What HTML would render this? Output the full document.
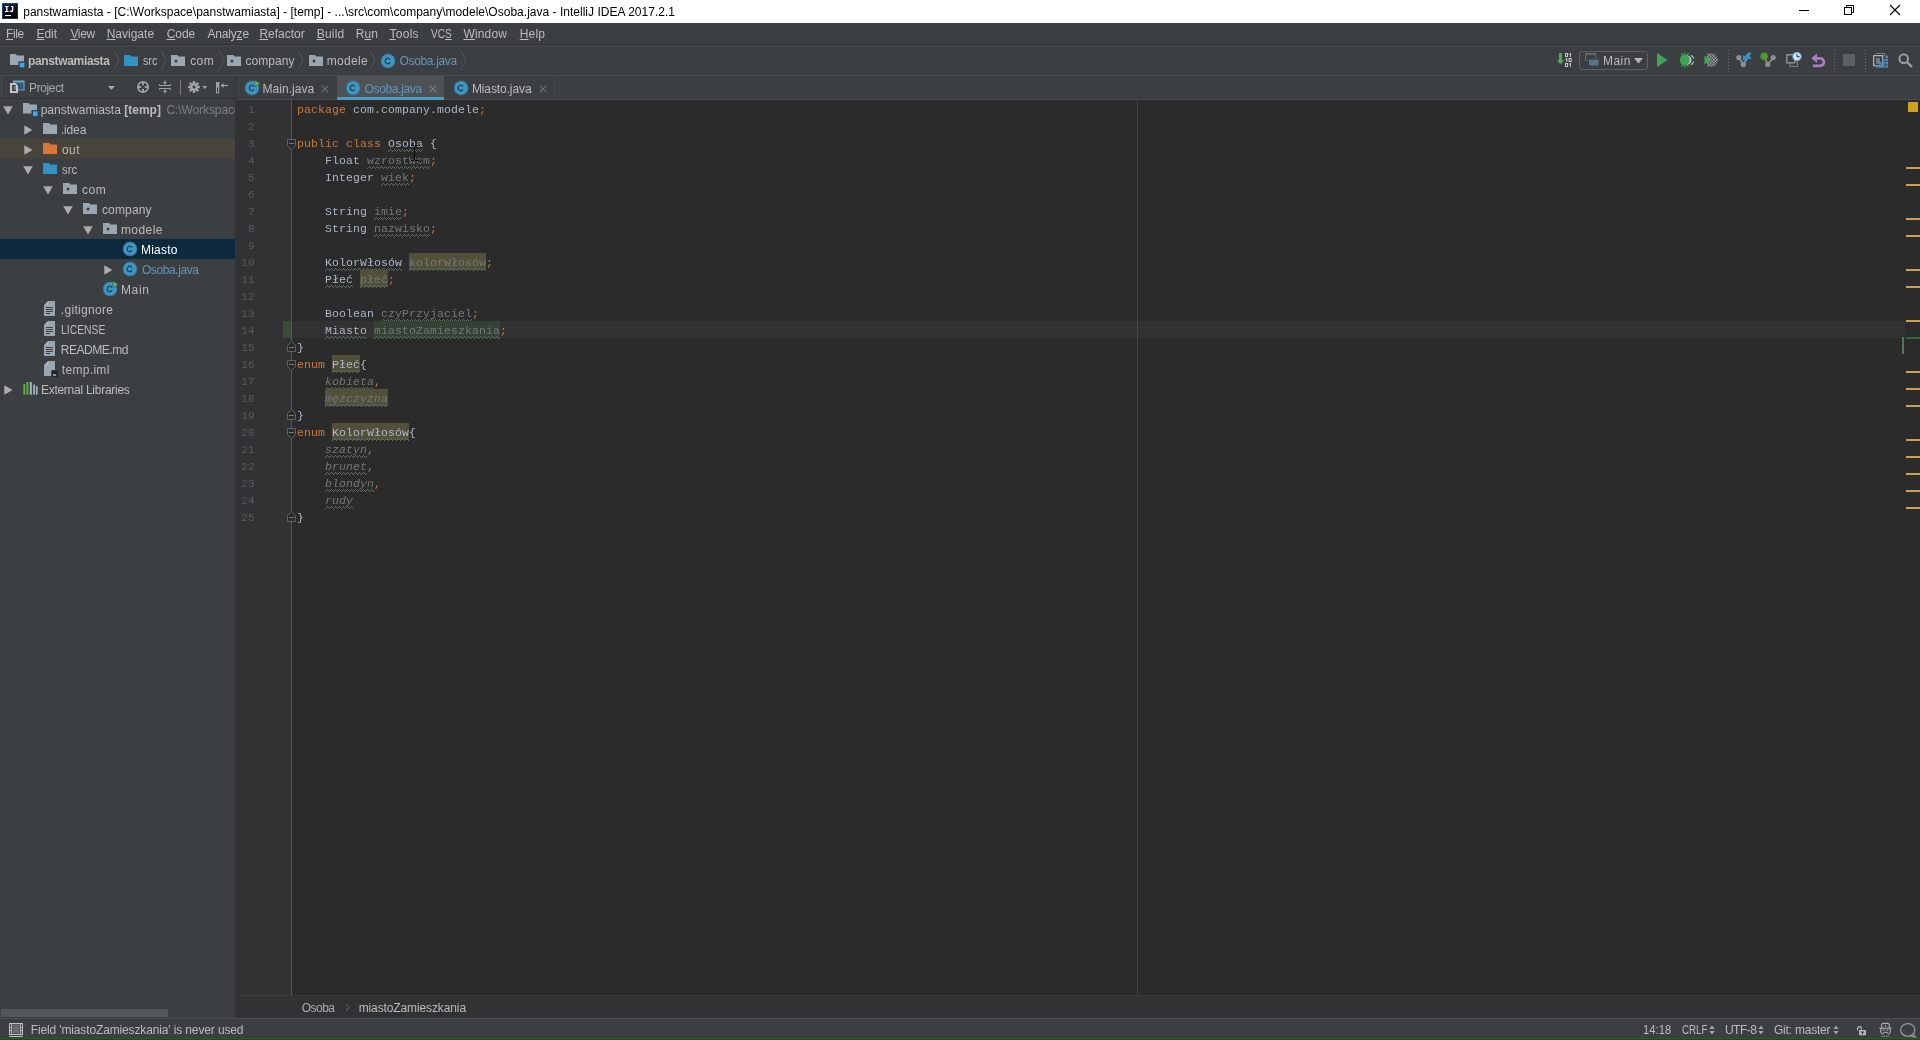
<!DOCTYPE html><html><head><meta charset="utf-8"><title>IntelliJ IDEA</title><style>
html,body{margin:0;padding:0;}
body{width:1920px;height:1040px;overflow:hidden;background:#3c3f41;position:relative;font-family:"Liberation Sans",sans-serif;}
#root{position:absolute;left:0;top:0;width:1920px;height:1040px;overflow:hidden;will-change:transform;}
#root>div,#root>svg,#root>span{position:absolute;display:block;}
#root>span{white-space:pre;line-height:1;}
u{text-decoration:underline;text-underline-offset:1px;}
.m{font-family:"Liberation Mono",monospace;}


</style></head><body><div id="root">
<div style="left:0px;top:0px;width:1920px;height:23px;background:#ffffff;"></div>
<svg style="left:2px;top:3px;" width="16" height="16" viewBox="0 0 16 16"><defs><linearGradient id="ij" x1="0" y1="0" x2="0.6" y2="1"><stop offset="0" stop-color="#1f4f7d"/><stop offset="1" stop-color="#14304e"/></linearGradient><linearGradient id="ij2" x1="0" y1="0" x2="0.3" y2="1"><stop offset="0" stop-color="#132c49"/><stop offset="0.55" stop-color="#070f1c"/><stop offset="1" stop-color="#000"/></linearGradient></defs><rect width="16" height="16" fill="url(#ij)"/><rect x="1" y="1" width="14" height="14" fill="url(#ij2)"/><rect x="3" y="12" width="6" height="1.1" fill="#fff"/><path d="M3 3H6.6V4.1H5.5V8H6.6V9.1H3V8H4.1V4.1H3Z" fill="#fff"/><path d="M9 3H11.3V7.2A1.9 1.9 0 0 1 9.3 9.2A2 2 0 0 1 7.4 7.7L8.6 7.2A0.8 0.8 0 0 0 9.3 7.9A0.7 0.7 0 0 0 9.9 7.1V4.1H9Z" fill="#fff"/></svg>
<div style="left:1799px;top:10px;width:10px;height:1px;background:#000;"></div>
<svg style="left:1843px;top:4px;" width="12" height="12" viewBox="0 0 12 12"><path d="M3.5 3.5V1.5H10.5V8.5H8.5" fill="none" stroke="#000" stroke-width="1"/><rect x="1.5" y="3.5" width="7" height="7" fill="none" stroke="#000" stroke-width="1"/></svg>
<svg style="left:1889px;top:4px;" width="12" height="12" viewBox="0 0 12 12"><path d="M1 1L11 11M11 1L1 11" fill="none" stroke="#000" stroke-width="1.1"/></svg>
<div style="left:0px;top:23px;width:1920px;height:22px;background:#3c3f41;"></div>
<div style="left:0px;top:44px;width:1920px;height:1px;background:#2d2f31;"></div>
<div style="left:0px;top:45px;width:1920px;height:1px;background:#484b4d;"></div>
<div style="left:0px;top:46px;width:1920px;height:29px;background:#3c3f41;"></div>
<div style="left:0px;top:75px;width:1920px;height:1px;background:#4b4e50;"></div>
<svg style="left:10px;top:54px;overflow:visible;" width="17" height="15" viewBox="0 0 17 15"><path d="M0 0H5.5L7 1.5H14V7.5H8.5V11H0Z" fill="#9aa7b0"/><rect x="9.3" y="8.3" width="5.6" height="5.6" fill="#45a8dc" stroke="#1f4a63" stroke-width="1"/></svg>
<svg style="left:113px;top:50px;" width="8" height="21" viewBox="0 0 8 21"><path d="M1 0.5L6 10.2L1 20" fill="none" stroke="#54575a" stroke-width="1"/></svg>
<svg style="left:124px;top:55px;" width="14" height="11" viewBox="0 0 14 11"><path d="M0 0H6L7.5 1.5H14V11H0Z" fill="#3592c4"/></svg>
<svg style="left:160px;top:50px;" width="8" height="21" viewBox="0 0 8 21"><path d="M1 0.5L6 10.2L1 20" fill="none" stroke="#54575a" stroke-width="1"/></svg>
<svg style="left:171px;top:55px;" width="14" height="11" viewBox="0 0 14 11"><path d="M0 0H6L7.5 1.5H14V11H0Z" fill="#9aa7b0"/><circle cx="5" cy="6" r="1.5" fill="#3c3f41"/></svg>
<svg style="left:217.5px;top:50px;" width="8" height="21" viewBox="0 0 8 21"><path d="M1 0.5L6 10.2L1 20" fill="none" stroke="#54575a" stroke-width="1"/></svg>
<svg style="left:227px;top:55px;" width="14" height="11" viewBox="0 0 14 11"><path d="M0 0H6L7.5 1.5H14V11H0Z" fill="#9aa7b0"/><circle cx="5" cy="6" r="1.5" fill="#3c3f41"/></svg>
<svg style="left:297px;top:50px;" width="8" height="21" viewBox="0 0 8 21"><path d="M1 0.5L6 10.2L1 20" fill="none" stroke="#54575a" stroke-width="1"/></svg>
<svg style="left:309px;top:55px;" width="14" height="11" viewBox="0 0 14 11"><path d="M0 0H6L7.5 1.5H14V11H0Z" fill="#9aa7b0"/><circle cx="5" cy="6" r="1.5" fill="#3c3f41"/></svg>
<svg style="left:368.5px;top:50px;" width="8" height="21" viewBox="0 0 8 21"><path d="M1 0.5L6 10.2L1 20" fill="none" stroke="#54575a" stroke-width="1"/></svg>
<svg style="left:381px;top:54px;overflow:visible;" width="15" height="14" viewBox="0 0 15 14"><circle cx="7.05" cy="6.95" r="7" fill="#4194bf" stroke="#2f6f92" stroke-width="0.7"/><path d="M8.9 5.6A2.5 2.8 0 1 0 8.9 8.4" fill="none" stroke="#123d5a" stroke-width="1.25"/></svg>
<svg style="left:459.5px;top:50px;" width="8" height="21" viewBox="0 0 8 21"><path d="M1 0.5L6 10.2L1 20" fill="none" stroke="#54575a" stroke-width="1"/></svg>
<div style="left:0px;top:76px;width:236px;height:942px;background:#3c3f41;"></div>
<div style="left:0px;top:98px;width:236px;height:1px;background:#2f3133;"></div>
<div style="left:235px;top:76px;width:1px;height:942px;background:#2f3133;"></div>
<div style="left:1px;top:76px;width:1px;height:22px;background:#4b4e50;"></div>
<svg style="left:10px;top:80px;" width="15" height="14" viewBox="0 0 15 14"><rect x="3.5" y="1" width="10.5" height="9" fill="#2c5a7c" stroke="#7ba3c0" stroke-width="1"/><rect x="3.5" y="1" width="10.5" height="1.5" fill="#7ba3c0"/><path d="M0 3H5.5L8 5.5V13H0Z" fill="#c4c6c8"/><path d="M2.2 5H5L6 6V11H2.2Z" fill="#2b2b2b"/><path d="M3.5 7H6M3.5 9H6" stroke="#c4c6c8" stroke-width="1"/></svg>
<svg style="left:108px;top:86px;" width="7" height="4" viewBox="0 0 7 4"><path d="M0 0H7L3.5 4Z" fill="#a5a8aa"/></svg>
<svg style="left:137px;top:81px;" width="12" height="12" viewBox="0 0 12 12"><circle cx="6" cy="6" r="5.1" fill="none" stroke="#a0a3a5" stroke-width="1.7"/><path d="M6 0.5V4.2M6 7.8V11.5M0.5 6H4.2M7.8 6H11.5" stroke="#a0a3a5" stroke-width="1.9"/></svg>
<svg style="left:159px;top:80px;" width="12" height="14" viewBox="0 0 12 14"><path d="M0.5 5.5H11.5M0.5 8.5H11.5" stroke="#a0a3a5" stroke-width="1"/><path d="M0.5 4V5.5M11.5 4V5.5M0.5 10V8.5M11.5 10V8.5" stroke="#a0a3a5" stroke-width="1"/><path d="M6 0.5V4M6 13.5V10" stroke="#a0a3a5" stroke-width="1.1"/><path d="M3.8 2.2L6 4.6L8.2 2.2ZM3.8 11.8L6 9.4L8.2 11.8Z" fill="#a0a3a5"/></svg>
<div style="left:179.5px;top:80px;width:1.5px;height:15px;background:#77797b;"></div>
<svg style="left:188px;top:81px;" width="20" height="12" viewBox="0 0 20 12"><g transform="translate(6,6)"><circle r="4.1" fill="#a0a3a5"/><g stroke="#a0a3a5" stroke-width="2.3"><path d="M0 -6V6M-6 0H6M-4.3 -4.3L4.3 4.3M-4.3 4.3L4.3 -4.3"/></g><circle r="1.5" fill="#3c3f41"/></g><path d="M14.2 5H19.2L16.7 8Z" fill="#a0a3a5"/></svg>
<svg style="left:216px;top:82px;" width="13" height="12" viewBox="0 0 13 12"><rect x="0.5" y="0.5" width="2.2" height="10.5" fill="none" stroke="#a0a3a5" stroke-width="1"/><rect x="0" y="0" width="3.2" height="5.5" fill="#a0a3a5"/><path d="M5 3.5H12" stroke="#a0a3a5" stroke-width="1.2"/><path d="M7.6 1L5 3.5L7.6 6Z" fill="#a0a3a5"/></svg>
<div style="left:0px;top:139px;width:235px;height:20px;background:#47453b;"></div>
<div style="left:0px;top:239px;width:235px;height:20px;background:#0d293e;"></div>
<svg style="left:3px;top:106px;" width="10" height="9" viewBox="0 0 10 9"><path d="M0.2 0.3H9.8L5 8.5Z" fill="#adadad"/></svg>
<svg style="left:23px;top:103px;overflow:visible;" width="17" height="15" viewBox="0 0 17 15"><path d="M0 0H5.5L7 1.5H14V7H8.5V10.5H0Z" fill="#9aa7b0"/><rect x="9.4" y="7.9" width="5.6" height="5.6" fill="#45a8dc" stroke="#1f4a63" stroke-width="1"/></svg>
<div style="left:166.5px;top:99px;width:68px;height:20px;overflow:hidden;"><span style="position:absolute;left:0;top:4.5px;font-size:12px;line-height:1;color:#7d8082;white-space:pre;letter-spacing:-0.1px;">C:\Workspace\panstwamiasta</span></div>
<svg style="left:24px;top:125px;" width="9" height="10" viewBox="0 0 9 10"><path d="M0.3 0.3L8.5 5L0.3 9.7Z" fill="#adadad"/></svg>
<svg style="left:43px;top:123px;" width="14" height="11" viewBox="0 0 14 11"><path d="M0 0H6L7.5 1.5H14V11H0Z" fill="#9aa7b0"/></svg>
<svg style="left:24px;top:145px;" width="9" height="10" viewBox="0 0 9 10"><path d="M0.3 0.3L8.5 5L0.3 9.7Z" fill="#adadad"/></svg>
<svg style="left:43px;top:143px;" width="14" height="11" viewBox="0 0 14 11"><path d="M0 0H6L7.5 1.5H14V11H0Z" fill="#d9763a"/></svg>
<svg style="left:23px;top:166px;" width="10" height="9" viewBox="0 0 10 9"><path d="M0.2 0.3H9.8L5 8.5Z" fill="#adadad"/></svg>
<svg style="left:43px;top:163px;" width="14" height="11" viewBox="0 0 14 11"><path d="M0 0H6L7.5 1.5H14V11H0Z" fill="#3592c4"/></svg>
<svg style="left:43px;top:186px;" width="10" height="9" viewBox="0 0 10 9"><path d="M0.2 0.3H9.8L5 8.5Z" fill="#adadad"/></svg>
<svg style="left:63px;top:183px;" width="14" height="11" viewBox="0 0 14 11"><path d="M0 0H6L7.5 1.5H14V11H0Z" fill="#9aa7b0"/><circle cx="5" cy="6" r="1.5" fill="#3c3f41"/></svg>
<svg style="left:63px;top:206px;" width="10" height="9" viewBox="0 0 10 9"><path d="M0.2 0.3H9.8L5 8.5Z" fill="#adadad"/></svg>
<svg style="left:83px;top:203px;" width="14" height="11" viewBox="0 0 14 11"><path d="M0 0H6L7.5 1.5H14V11H0Z" fill="#9aa7b0"/><circle cx="5" cy="6" r="1.5" fill="#3c3f41"/></svg>
<svg style="left:83px;top:226px;" width="10" height="9" viewBox="0 0 10 9"><path d="M0.2 0.3H9.8L5 8.5Z" fill="#adadad"/></svg>
<svg style="left:103px;top:223px;" width="14" height="11" viewBox="0 0 14 11"><path d="M0 0H6L7.5 1.5H14V11H0Z" fill="#9aa7b0"/><circle cx="5" cy="6" r="1.5" fill="#3c3f41"/></svg>
<svg style="left:123px;top:242px;overflow:visible;" width="15" height="14" viewBox="0 0 15 14"><circle cx="7.05" cy="6.95" r="7" fill="#4194bf" stroke="#2f6f92" stroke-width="0.7"/><path d="M8.9 5.6A2.5 2.8 0 1 0 8.9 8.4" fill="none" stroke="#123d5a" stroke-width="1.25"/></svg>
<svg style="left:104px;top:265px;" width="9" height="10" viewBox="0 0 9 10"><path d="M0.3 0.3L8.5 5L0.3 9.7Z" fill="#adadad"/></svg>
<svg style="left:123px;top:262px;overflow:visible;" width="15" height="14" viewBox="0 0 15 14"><circle cx="7.05" cy="6.95" r="7" fill="#4194bf" stroke="#2f6f92" stroke-width="0.7"/><path d="M8.9 5.6A2.5 2.8 0 1 0 8.9 8.4" fill="none" stroke="#123d5a" stroke-width="1.25"/></svg>
<svg style="left:103px;top:282px;overflow:visible;" width="15" height="14" viewBox="0 0 15 14"><circle cx="7.05" cy="6.95" r="7" fill="#4194bf" stroke="#2f6f92" stroke-width="0.7"/><path d="M8.9 5.6A2.5 2.8 0 1 0 8.9 8.4" fill="none" stroke="#123d5a" stroke-width="1.25"/><path d="M9.9 -1L15.3 2.4L9.9 5.8Z" fill="#62b35a" stroke="#3c3f41" stroke-width="0.5"/></svg>
<svg style="left:44px;top:301px;" width="11" height="15" viewBox="0 0 11 15"><path d="M4 0H11V15H0V4Z" fill="#9aa7b0"/><path d="M0.6 4L4 0.6V4Z" fill="#b4bec6" opacity="0.8"/><path d="M2 6.5H9M2 8.5H9M2 10.5H9M2 12.5H6" stroke="#3c3f41" stroke-width="1"/></svg>
<svg style="left:44px;top:321px;" width="11" height="15" viewBox="0 0 11 15"><path d="M4 0H11V15H0V4Z" fill="#9aa7b0"/><path d="M0.6 4L4 0.6V4Z" fill="#b4bec6" opacity="0.8"/><path d="M2 6.5H9M2 8.5H9M2 10.5H9M2 12.5H6" stroke="#3c3f41" stroke-width="1"/></svg>
<svg style="left:44px;top:341px;" width="11" height="15" viewBox="0 0 11 15"><path d="M4 0H11V15H0V4Z" fill="#9aa7b0"/><path d="M0.6 4L4 0.6V4Z" fill="#b4bec6" opacity="0.8"/><path d="M2 6.5H9M2 8.5H9M2 10.5H9M2 12.5H6" stroke="#3c3f41" stroke-width="1"/></svg>
<svg style="left:44px;top:361px;overflow:visible;" width="14" height="16" viewBox="0 0 14 16"><path d="M4 0H11V9H7.5V15H0V4Z" fill="#9aa7b0"/><path d="M0.6 4L4 0.6V4Z" fill="#b4bec6" opacity="0.8"/><rect x="7.5" y="9.7" width="6.3" height="6.3" fill="#232526"/><rect x="9" y="13.5" width="3.2" height="1" fill="#fff"/></svg>
<svg style="left:4px;top:385px;" width="9" height="10" viewBox="0 0 9 10"><path d="M0.3 0.3L8.5 5L0.3 9.7Z" fill="#adadad"/></svg>
<svg style="left:22.5px;top:382px;" width="15" height="13" viewBox="0 0 15 13"><g fill="#62b543"><rect x="0.4" y="2" width="1.8" height="10.7"/><rect x="3.5" y="0" width="1.9" height="12.7"/></g><g fill="#a7b9c6"><rect x="6.9" y="0" width="1.9" height="12.7"/><rect x="10.2" y="2.6" width="1.7" height="10.1"/><rect x="12.9" y="4.2" width="1.7" height="8.5"/></g></svg>
<div style="left:1px;top:1009px;width:167px;height:8px;background:#55585a;"></div>
<div style="left:236px;top:76px;width:1684px;height:24px;background:#3c3f41;"></div>
<div style="left:236px;top:99px;width:1684px;height:1px;background:#484a4b;"></div>
<div style="left:554px;top:76px;width:1px;height:23px;background:#464949;"></div>
<div style="left:337px;top:76px;width:107px;height:21px;background:#4e5254;"></div>
<div style="left:337px;top:97px;width:107px;height:3px;background:#4a9cc4;"></div>
<svg style="left:245px;top:81px;overflow:visible;" width="15" height="14" viewBox="0 0 15 14"><circle cx="7.05" cy="6.95" r="7" fill="#4194bf" stroke="#2f6f92" stroke-width="0.7"/><path d="M8.9 5.6A2.5 2.8 0 1 0 8.9 8.4" fill="none" stroke="#123d5a" stroke-width="1.25"/><path d="M9.9 -1L15.3 2.4L9.9 5.8Z" fill="#62b35a" stroke="#3c3f41" stroke-width="0.5"/></svg>
<svg style="left:346px;top:81px;overflow:visible;" width="15" height="14" viewBox="0 0 15 14"><circle cx="7.05" cy="6.95" r="7" fill="#4194bf" stroke="#2f6f92" stroke-width="0.7"/><path d="M8.9 5.6A2.5 2.8 0 1 0 8.9 8.4" fill="none" stroke="#123d5a" stroke-width="1.25"/></svg>
<svg style="left:454px;top:81px;overflow:visible;" width="15" height="14" viewBox="0 0 15 14"><circle cx="7.05" cy="6.95" r="7" fill="#4194bf" stroke="#2f6f92" stroke-width="0.7"/><path d="M8.9 5.6A2.5 2.8 0 1 0 8.9 8.4" fill="none" stroke="#123d5a" stroke-width="1.25"/></svg>
<svg style="left:320.5px;top:84.5px;" width="8" height="8" viewBox="0 0 8 8"><path d="M0.7 0.7L7.3 7.3M7.3 0.7L0.7 7.3" stroke="#6e7173" stroke-width="1.1" fill="none"/></svg>
<svg style="left:428.7px;top:84.5px;" width="8" height="8" viewBox="0 0 8 8"><path d="M0.7 0.7L7.3 7.3M7.3 0.7L0.7 7.3" stroke="#7f8385" stroke-width="1.1" fill="none"/></svg>
<svg style="left:538.7px;top:84.5px;" width="8" height="8" viewBox="0 0 8 8"><path d="M0.7 0.7L7.3 7.3M7.3 0.7L0.7 7.3" stroke="#6e7173" stroke-width="1.1" fill="none"/></svg>
<div style="left:236px;top:100px;width:1669px;height:896px;background:#2b2b2b;"></div>
<div style="left:236px;top:100px;width:55px;height:896px;background:#303234;"></div>
<div style="left:291px;top:100px;width:1px;height:896px;background:#54575a;"></div>
<div style="left:1905px;top:100px;width:15px;height:896px;background:#2b2b2b;"></div>
<div style="left:292px;top:321px;width:1613px;height:17px;background:#323232;"></div>
<div style="left:283px;top:321px;width:8px;height:17px;background:#384c38;"></div>
<div style="left:1137px;top:100px;width:1px;height:896px;background:#444444;"></div>
<div style="left:1137px;top:321px;width:1px;height:17px;background:#484848;"></div>
<svg style="left:0;top:0" width="1" height="1"><defs><pattern id="wv" width="4" height="3" patternUnits="userSpaceOnUse"><rect x="0" y="2" width="1" height="1" fill="#58705c"/><rect x="1" y="1" width="1" height="1" fill="#58705c"/><rect x="2" y="0" width="1" height="1" fill="#58705c"/><rect x="3" y="1" width="1" height="1" fill="#58705c"/></pattern></defs></svg>
<svg style="left:388.0px;top:149px;" width="35" height="3" viewBox="0 0 35 3"><rect width="35" height="3" fill="url(#wv)" shape-rendering="crispEdges"/></svg>
<svg style="left:367.0px;top:166px;" width="63" height="3" viewBox="0 0 63 3"><rect width="63" height="3" fill="url(#wv)" shape-rendering="crispEdges"/></svg>
<svg style="left:381.0px;top:183px;" width="28" height="3" viewBox="0 0 28 3"><rect width="28" height="3" fill="url(#wv)" shape-rendering="crispEdges"/></svg>
<svg style="left:374.0px;top:217px;" width="28" height="3" viewBox="0 0 28 3"><rect width="28" height="3" fill="url(#wv)" shape-rendering="crispEdges"/></svg>
<svg style="left:374.0px;top:234px;" width="56" height="3" viewBox="0 0 56 3"><rect width="56" height="3" fill="url(#wv)" shape-rendering="crispEdges"/></svg>
<svg style="left:325.0px;top:268px;" width="77" height="3" viewBox="0 0 77 3"><rect width="77" height="3" fill="url(#wv)" shape-rendering="crispEdges"/></svg>
<div style="left:409.0px;top:253px;width:77.0px;height:17px;background:#52503a;"></div>
<svg style="left:409.0px;top:268px;" width="77" height="3" viewBox="0 0 77 3"><rect width="77" height="3" fill="url(#wv)" shape-rendering="crispEdges"/></svg>
<svg style="left:325.0px;top:285px;" width="28" height="3" viewBox="0 0 28 3"><rect width="28" height="3" fill="url(#wv)" shape-rendering="crispEdges"/></svg>
<div style="left:360.0px;top:270px;width:28.0px;height:17px;background:#52503a;"></div>
<svg style="left:360.0px;top:285px;" width="28" height="3" viewBox="0 0 28 3"><rect width="28" height="3" fill="url(#wv)" shape-rendering="crispEdges"/></svg>
<svg style="left:381.0px;top:319px;" width="91" height="3" viewBox="0 0 91 3"><rect width="91" height="3" fill="url(#wv)" shape-rendering="crispEdges"/></svg>
<svg style="left:325.0px;top:336px;" width="42" height="3" viewBox="0 0 42 3"><rect width="42" height="3" fill="url(#wv)" shape-rendering="crispEdges"/></svg>
<div style="left:374.0px;top:321px;width:126.0px;height:17px;background:#344134;"></div>
<svg style="left:374.0px;top:336px;" width="126" height="3" viewBox="0 0 126 3"><rect width="126" height="3" fill="url(#wv)" shape-rendering="crispEdges"/></svg>
<div style="left:332.0px;top:355px;width:28.0px;height:17px;background:#52503a;"></div>
<svg style="left:332.0px;top:370px;" width="28" height="3" viewBox="0 0 28 3"><rect width="28" height="3" fill="url(#wv)" shape-rendering="crispEdges"/></svg>
<svg style="left:325.0px;top:387px;" width="49" height="3" viewBox="0 0 49 3"><rect width="49" height="3" fill="url(#wv)" shape-rendering="crispEdges"/></svg>
<div style="left:325.0px;top:389px;width:63.0px;height:17px;background:#52503a;"></div>
<svg style="left:325.0px;top:404px;" width="63" height="3" viewBox="0 0 63 3"><rect width="63" height="3" fill="url(#wv)" shape-rendering="crispEdges"/></svg>
<div style="left:332.0px;top:423px;width:77.0px;height:17px;background:#52503a;"></div>
<svg style="left:332.0px;top:438px;" width="77" height="3" viewBox="0 0 77 3"><rect width="77" height="3" fill="url(#wv)" shape-rendering="crispEdges"/></svg>
<svg style="left:325.0px;top:455px;" width="42" height="3" viewBox="0 0 42 3"><rect width="42" height="3" fill="url(#wv)" shape-rendering="crispEdges"/></svg>
<svg style="left:325.0px;top:472px;" width="42" height="3" viewBox="0 0 42 3"><rect width="42" height="3" fill="url(#wv)" shape-rendering="crispEdges"/></svg>
<svg style="left:325.0px;top:489px;" width="49" height="3" viewBox="0 0 49 3"><rect width="49" height="3" fill="url(#wv)" shape-rendering="crispEdges"/></svg>
<svg style="left:325.0px;top:506px;" width="28" height="3" viewBox="0 0 28 3"><rect width="28" height="3" fill="url(#wv)" shape-rendering="crispEdges"/></svg>
<svg style="left:287px;top:139px;overflow:visible;" width="9" height="11" viewBox="0 0 9 11"><path d="M0.5 0.5H8.5V6.5L4.5 10.5L0.5 6.5Z" fill="#2b2b2b" stroke="#5f6163" stroke-width="1"/><path d="M2 4.5H7" stroke="#77797b" stroke-width="1"/></svg>
<svg style="left:287px;top:360px;overflow:visible;" width="9" height="11" viewBox="0 0 9 11"><path d="M0.5 0.5H8.5V6.5L4.5 10.5L0.5 6.5Z" fill="#2b2b2b" stroke="#5f6163" stroke-width="1"/><path d="M2 4.5H7" stroke="#77797b" stroke-width="1"/></svg>
<svg style="left:287px;top:428px;overflow:visible;" width="9" height="11" viewBox="0 0 9 11"><path d="M0.5 0.5H8.5V6.5L4.5 10.5L0.5 6.5Z" fill="#2b2b2b" stroke="#5f6163" stroke-width="1"/><path d="M2 4.5H7" stroke="#77797b" stroke-width="1"/></svg>
<svg style="left:287px;top:341px;overflow:visible;" width="9" height="11" viewBox="0 0 9 11"><path d="M4.5 0.5L8.5 4.5V10.5H0.5V4.5Z" fill="#2b2b2b" stroke="#5f6163" stroke-width="1"/><path d="M2 6.5H7" stroke="#77797b" stroke-width="1"/></svg>
<svg style="left:287px;top:409px;overflow:visible;" width="9" height="11" viewBox="0 0 9 11"><path d="M4.5 0.5L8.5 4.5V10.5H0.5V4.5Z" fill="#2b2b2b" stroke="#5f6163" stroke-width="1"/><path d="M2 6.5H7" stroke="#77797b" stroke-width="1"/></svg>
<svg style="left:287px;top:511px;overflow:visible;" width="9" height="11" viewBox="0 0 9 11"><path d="M4.5 0.5L8.5 4.5V10.5H0.5V4.5Z" fill="#2b2b2b" stroke="#5f6163" stroke-width="1"/><path d="M2 6.5H7" stroke="#77797b" stroke-width="1"/></svg>
<svg style="left:1557px;top:53px;overflow:visible;" width="15" height="14" viewBox="0 0 15 14"><path d="M2 0H5V7H7L3.5 11.5L0 7H2Z" fill="#4fa85c"/><rect x="8.5" y="0.5" width="2" height="3" fill="none" stroke="#c8c8c8" stroke-width="1"/><path d="M11.9 1L13.1 0H13.899999999999999V4H12.9V1.3L11.9 1.9Z" fill="#c8c8c8"/><path d="M8.3 6L9.5 5H10.3V9H9.3V6.3L8.3 6.9Z" fill="#c8c8c8"/><rect x="12.1" y="5.5" width="2" height="3" fill="none" stroke="#c8c8c8" stroke-width="1"/><rect x="8.5" y="10.5" width="2" height="3" fill="none" stroke="#c8c8c8" stroke-width="1"/><path d="M11.9 11L13.1 10H13.899999999999999V14H12.9V11.3L11.9 11.9Z" fill="#c8c8c8"/></svg>
<div style="left:1579px;top:51px;width:67px;height:16.5px;border:1px solid #5e6163;border-radius:3px;background:#3c3f41;"></div>
<svg style="left:1585px;top:53px;" width="15" height="14" viewBox="0 0 15 14"><rect x="0.5" y="0.5" width="10" height="7" fill="none" stroke="#65686a" stroke-width="1"/><rect x="0.5" y="0.5" width="10" height="1.6" fill="#65686a"/><rect x="3.5" y="5" width="10.5" height="8" fill="#5f7384" stroke="#2f3f4c" stroke-width="1"/><rect x="3.5" y="5" width="10.5" height="2" fill="#3a4e60"/></svg>
<svg style="left:1634px;top:58px;" width="9" height="6" viewBox="0 0 9 6"><path d="M0 0H9L4.5 5.5Z" fill="#b4b4b4"/></svg>
<svg style="left:1656px;top:53px;" width="12" height="14" viewBox="0 0 12 14"><path d="M1 0L11.5 7L1 14Z" fill="#3fa556"/></svg>
<svg style="left:1679px;top:52px;" width="16" height="16" viewBox="0 0 16 16"><g stroke="#3fa556" stroke-width="1.2" fill="none"><path d="M2.3 1.3L4.2 3.8M5.8 0.6V2.8M9.5 1.3L7.6 3.8M2.3 14.7L4.2 12.2M5.8 15.4V13.2M9.5 14.7L7.6 12.2"/></g><path d="M8 3.2C14.2 4.2 14.2 11.8 8 12.8Z" fill="#b9c0b9"/><ellipse cx="5.7" cy="8" rx="4.9" ry="5.4" fill="#3fa556"/><path d="M11.8 3.4C13.4 3.8 14.4 5 14.8 6.6M11.8 12.6C13.4 12.2 14.4 11 14.8 9.4" stroke="#b9c0b9" stroke-width="1.1" fill="none"/></svg>
<svg style="left:1704px;top:53px;" width="16" height="14" viewBox="0 0 16 14"><defs><pattern id="chk" width="3" height="3" patternUnits="userSpaceOnUse"><rect width="1.5" height="1.5" fill="#a9abad"/><rect x="1.5" y="1.5" width="1.5" height="1.5" fill="#a9abad"/></pattern></defs><path d="M3 0.5H10L15 7L10 13.5H3Z" fill="url(#chk)"/><path d="M0.5 2.5L7 7L0.5 11.5Z" fill="#3fa556"/></svg>
<svg style="left:1728px;top:50px;" width="1" height="23" viewBox="0 0 1 23"><path d="M0.5 0V23" stroke="#6a6d6f" stroke-width="1" stroke-dasharray="1 2"/></svg>
<svg style="left:1736px;top:52px;" width="16" height="15" viewBox="0 0 16 15"><path d="M2.8 5.5L7.3 12.5L11.5 6" stroke="#8c8e90" stroke-width="1.8" fill="none"/><circle cx="2.8" cy="5.6" r="2.6" fill="#8c8e90"/><circle cx="7.3" cy="12.4" r="2.6" fill="#8c8e90"/><path d="M6.8 8.2V2.8L8.5 4.4L12 0.6H15.3L13.7 3.7L15.3 6.9H12L10.4 6.5L12 8.2Z" fill="#2d93c9"/></svg>
<svg style="left:1760px;top:52px;" width="16" height="15" viewBox="0 0 16 15"><path d="M3.8 4L7.8 12.5L13 6" stroke="#8c8e90" stroke-width="1.8" fill="none"/><circle cx="13.2" cy="5.6" r="2.6" fill="#8c8e90"/><circle cx="7.8" cy="12.4" r="2.6" fill="#8c8e90"/><circle cx="4.2" cy="4.2" r="3.7" fill="#4f9a2c"/></svg>
<svg style="left:1786px;top:52px;" width="16" height="15" viewBox="0 0 16 15"><rect x="4" y="7" width="7.5" height="7.5" fill="none" stroke="#77797b" stroke-width="1.2"/><rect x="0.8" y="2.8" width="8" height="8" fill="#3c3f41" stroke="#8c8e90" stroke-width="1.5"/><circle cx="11" cy="4.5" r="4.3" fill="#c9e6f7" stroke="#5f9fc9" stroke-width="0.8"/><path d="M11 2V4.8H13.6" stroke="#2b2b2b" stroke-width="1" fill="none"/></svg>
<svg style="left:1811px;top:53px;" width="15" height="15" viewBox="0 0 15 15"><path d="M6 0.5L0.3 5.3L6 10V6.8H9.2A2.3 2.3 0 0 1 9.2 11.4H2V14.2H9.2A5.1 5.1 0 0 0 9.2 4H6Z" fill="#a77fc0"/></svg>
<svg style="left:1834px;top:50px;" width="1" height="23" viewBox="0 0 1 23"><path d="M0.5 0V23" stroke="#6a6d6f" stroke-width="1" stroke-dasharray="1 2"/></svg>
<div style="left:1843px;top:54px;width:12px;height:12px;background:#5d6062;"></div>
<svg style="left:1865px;top:50px;" width="1" height="23" viewBox="0 0 1 23"><path d="M0.5 0V23" stroke="#6a6d6f" stroke-width="1" stroke-dasharray="1 2"/></svg>
<svg style="left:1873px;top:53px;" width="15" height="15" viewBox="0 0 15 15"><path d="M2.5 0.5H11.5V3" stroke="#77797b" stroke-width="1.2" fill="none"/><rect x="0.6" y="2.6" width="9" height="10" fill="#3c3f41" stroke="#b0b2b4" stroke-width="1.3"/><path d="M3 6H7M3 8H7M3 10H6" stroke="#b0b2b4" stroke-width="1"/><g fill="#4a88b8"><rect x="6" y="9" width="2.6" height="2.6"/><rect x="9.2" y="9" width="2.6" height="2.6"/><rect x="12.4" y="9" width="2.6" height="2.6"/><rect x="9.2" y="5.8" width="2.6" height="2.6"/><rect x="12.4" y="5.8" width="2.6" height="2.6"/><rect x="12.4" y="2.6" width="2.6" height="2.6"/><rect x="3" y="12.2" width="2.6" height="2.6"/><rect x="6" y="12.2" width="2.6" height="2.6"/><rect x="9.2" y="12.2" width="2.6" height="2.6"/><rect x="12.4" y="12.2" width="2.6" height="2.6"/></g></svg>
<svg style="left:1898px;top:53px;" width="15" height="15" viewBox="0 0 15 15"><circle cx="5.7" cy="5.7" r="4.3" fill="none" stroke="#a0a2a4" stroke-width="1.9"/><path d="M9 9L14 14" stroke="#a0a2a4" stroke-width="2.3"/></svg>
<div style="left:1908px;top:102px;width:10px;height:10px;background:#cfa01e;"></div>
<div style="left:1906px;top:167px;width:14px;height:2px;background:#c9a24e;"></div>
<div style="left:1906px;top:184px;width:14px;height:2px;background:#c9a24e;"></div>
<div style="left:1906px;top:218px;width:14px;height:2px;background:#c9a24e;"></div>
<div style="left:1906px;top:235px;width:14px;height:2px;background:#c9a24e;"></div>
<div style="left:1906px;top:269px;width:14px;height:2px;background:#c9a24e;"></div>
<div style="left:1906px;top:286px;width:14px;height:2px;background:#c9a24e;"></div>
<div style="left:1906px;top:320px;width:14px;height:2px;background:#c9a24e;"></div>
<div style="left:1906px;top:371px;width:14px;height:2px;background:#c9a24e;"></div>
<div style="left:1906px;top:388px;width:14px;height:2px;background:#c9a24e;"></div>
<div style="left:1906px;top:405px;width:14px;height:2px;background:#c9a24e;"></div>
<div style="left:1906px;top:439px;width:14px;height:2px;background:#c9a24e;"></div>
<div style="left:1906px;top:456px;width:14px;height:2px;background:#c9a24e;"></div>
<div style="left:1906px;top:473px;width:14px;height:2px;background:#c9a24e;"></div>
<div style="left:1906px;top:490px;width:14px;height:2px;background:#c9a24e;"></div>
<div style="left:1906px;top:507px;width:14px;height:2px;background:#c9a24e;"></div>
<div style="left:1902px;top:337px;width:2px;height:17px;background:#4f7a55;"></div>
<div style="left:1906px;top:337px;width:14px;height:2px;background:#2f6a3c;"></div>
<div style="left:236px;top:996px;width:1684px;height:22px;background:#303234;"></div>
<div style="left:236px;top:995px;width:1684px;height:1px;background:#3a3c3e;"></div>
<svg style="left:345px;top:1003px;" width="5" height="9" viewBox="0 0 5 9"><path d="M1 1L4 4.5L1 8" stroke="#6a6d6f" stroke-width="1" fill="none"/></svg>
<div style="left:0px;top:1019px;width:1920px;height:21px;background:#3c3f41;"></div>
<div style="left:0px;top:1018px;width:1920px;height:1px;background:#4b4e50;"></div>
<div style="left:0px;top:1038px;width:1920px;height:1px;background:#2a5a2e;"></div>
<div style="left:0px;top:1039px;width:1920px;height:1px;background:#1c4a20;"></div>
<svg style="left:9px;top:1023px;" width="14" height="15" viewBox="0 0 14 15"><rect x="0.5" y="0.5" width="13" height="11" fill="none" stroke="#c0c2c4" stroke-width="1"/><rect x="3.5" y="1.5" width="7" height="9" fill="#6b6d6f"/><path d="M2.5 0.5V11.5M11.5 0.5V11.5M0.5 4.5H2.5M0.5 7.5H2.5M11.5 4.5H13.5M11.5 7.5H13.5" stroke="#c0c2c4" stroke-width="0.9" fill="none"/><path d="M0 13.5H14" stroke="#c0c2c4" stroke-width="1"/></svg>
<svg style="left:1709px;top:1025px;" width="6" height="10" viewBox="0 0 6 10"><path d="M0.3 4L3 0.6L5.7 4ZM0.3 6L3 9.4L5.7 6Z" fill="#a0a2a4"/></svg>
<svg style="left:1757.5px;top:1025px;" width="6" height="10" viewBox="0 0 6 10"><path d="M0.3 4L3 0.6L5.7 4ZM0.3 6L3 9.4L5.7 6Z" fill="#a0a2a4"/></svg>
<svg style="left:1832.5px;top:1025px;" width="6" height="10" viewBox="0 0 6 10"><path d="M0.3 4L3 0.6L5.7 4ZM0.3 6L3 9.4L5.7 6Z" fill="#a0a2a4"/></svg>
<svg style="left:1856px;top:1026px;" width="11" height="10" viewBox="0 0 11 10"><path d="M1.6 4.6V2.6A1.9 1.9 0 0 1 5.4 2.6V3.4" stroke="#b8babc" stroke-width="1.2" fill="none"/><rect x="3" y="4" width="7" height="5.2" rx="0.6" fill="#b8babc"/><path d="M4.8 5.6H8.2V6.6H7V8.2H6V6.6H4.8Z" fill="#2b2d2f"/></svg>
<svg style="left:1879px;top:1022px;" width="14" height="16" viewBox="0 0 14 16"><path d="M2.6 6V3.4A2 2 0 0 1 4.6 1.4H8.4A2 2 0 0 1 10.4 3.4V6" stroke="#aeb0b2" stroke-width="1.1" fill="none"/><path d="M0.3 6.2H12.7" stroke="#aeb0b2" stroke-width="1.1"/><path d="M6.5 2.8V4.6" stroke="#aeb0b2" stroke-width="1"/><path d="M2.2 6.5C1.2 9 2 11.5 3.6 12.6M10.8 6.5C11.8 9 11 11.5 9.4 12.6" stroke="#aeb0b2" stroke-width="1.1" fill="none"/><path d="M3.8 8.2H5.6M7.4 8.2H9.2" stroke="#aeb0b2" stroke-width="1"/><path d="M4 11.6C4.6 9.8 8.4 9.8 9 11.6" stroke="#aeb0b2" stroke-width="1.2" fill="none"/><path d="M1.6 14.6L6 13.4V14.6ZM11.4 14.6L7 13.4V14.6Z" fill="#aeb0b2"/></svg>
<svg style="left:1900px;top:1023px;" width="17" height="16" viewBox="0 0 17 16"><ellipse cx="7.8" cy="6.9" rx="7.1" ry="6.3" fill="none" stroke="#8f9294" stroke-width="1.4"/><path d="M10.5 12.6C11.5 13.4 13.5 14 15.4 13.8C14 13 13.4 12 13.2 11" stroke="#8f9294" stroke-width="1.3" fill="none"/></svg>
<span style="left:23.2px;top:5.84px;font-size:12px;color:#000000;letter-spacing:0.015px;">panstwamiasta - [C:\Workspace\panstwamiasta] - [temp] - ...\src\com\company\modele\Osoba.java - IntelliJ IDEA 2017.2.1</span>
<span style="left:5.9px;top:27.84px;font-size:12px;color:#bbbbbb;letter-spacing:-0.333px;"><u>F</u>ile</span>
<span style="left:36.4px;top:27.84px;font-size:12px;color:#bbbbbb;letter-spacing:0.000px;"><u>E</u>dit</span>
<span style="left:70.4px;top:27.84px;font-size:12px;color:#bbbbbb;letter-spacing:-0.333px;"><u>V</u>iew</span>
<span style="left:106.7px;top:27.84px;font-size:12px;color:#bbbbbb;letter-spacing:0.000px;"><u>N</u>avigate</span>
<span style="left:166.7px;top:27.84px;font-size:12px;color:#bbbbbb;letter-spacing:-0.067px;"><u>C</u>ode</span>
<span style="left:207.4px;top:27.84px;font-size:12px;color:#bbbbbb;letter-spacing:-0.167px;">Analy<u>z</u>e</span>
<span style="left:259.4px;top:27.84px;font-size:12px;color:#bbbbbb;letter-spacing:0.000px;"><u>R</u>efactor</span>
<span style="left:316.7px;top:27.84px;font-size:12px;color:#bbbbbb;letter-spacing:0.200px;"><u>B</u>uild</span>
<span style="left:355.7px;top:27.84px;font-size:12px;color:#bbbbbb;letter-spacing:0.100px;">R<u>u</u>n</span>
<span style="left:389.4px;top:27.84px;font-size:12px;color:#bbbbbb;letter-spacing:0.300px;"><u>T</u>ools</span>
<span style="left:430.6px;top:27.84px;font-size:12px;color:#bbbbbb;transform:scaleX(0.8421);transform-origin:0 0;">VC<u>S</u></span>
<span style="left:463.4px;top:27.84px;font-size:12px;color:#bbbbbb;letter-spacing:0.160px;"><u>W</u>indow</span>
<span style="left:519.7px;top:27.84px;font-size:12px;color:#bbbbbb;letter-spacing:0.200px;"><u>H</u>elp</span>
<span style="left:27.9px;top:54.84px;font-size:12px;color:#bbbbbb;letter-spacing:-0.333px;font-weight:bold;">panstwamiasta</span>
<span style="left:142.9px;top:54.84px;font-size:12px;color:#bbbbbb;transform:scaleX(0.8896);transform-origin:0 0;">src</span>
<span style="left:190.2px;top:54.84px;font-size:12px;color:#bbbbbb;letter-spacing:0.400px;">com</span>
<span style="left:245.4px;top:54.84px;font-size:12px;color:#bbbbbb;letter-spacing:0.067px;">company</span>
<span style="left:326.8px;top:54.84px;font-size:12px;color:#bbbbbb;letter-spacing:0.320px;">modele</span>
<span style="left:399.6px;top:54.84px;font-size:12px;color:#6394bb;letter-spacing:-0.356px;">Osoba.java</span>
<span style="left:29.0px;top:81.84px;font-size:12px;color:#a5a8aa;letter-spacing:-0.367px;">Project</span>
<span style="left:40.7px;top:103.84px;font-size:12px;color:#bbbbbb;letter-spacing:0.011px;">panstwamiasta <b>[temp]</b></span>
<span style="left:60.9px;top:123.84px;font-size:12px;color:#bbbbbb;letter-spacing:-0.150px;">.idea</span>
<span style="left:61.9px;top:143.84px;font-size:12px;color:#bbbbbb;letter-spacing:0.500px;">out</span>
<span style="left:61.9px;top:163.84px;font-size:12px;color:#bbbbbb;transform:scaleX(0.9397);transform-origin:0 0;">src</span>
<span style="left:81.9px;top:183.84px;font-size:12px;color:#bbbbbb;letter-spacing:0.600px;">com</span>
<span style="left:101.9px;top:203.84px;font-size:12px;color:#bbbbbb;letter-spacing:0.167px;">company</span>
<span style="left:120.9px;top:223.84px;font-size:12px;color:#bbbbbb;letter-spacing:0.440px;">modele</span>
<span style="left:140.9px;top:243.84px;font-size:12px;color:#ffffff;letter-spacing:0.240px;">Miasto</span>
<span style="left:141.9px;top:263.84px;font-size:12px;color:#6394bb;letter-spacing:-0.400px;">Osoba.java</span>
<span style="left:120.9px;top:283.84px;font-size:12px;color:#bbbbbb;letter-spacing:0.667px;">Main</span>
<span style="left:60.8px;top:303.84px;font-size:12px;color:#bbbbbb;letter-spacing:0.311px;">.gitignore</span>
<span style="left:60.8px;top:323.84px;font-size:12px;color:#bbbbbb;transform:scaleX(0.8642);transform-origin:0 0;">LICENSE</span>
<span style="left:60.8px;top:343.84px;font-size:12px;color:#bbbbbb;letter-spacing:-0.475px;">README.md</span>
<span style="left:61.8px;top:363.84px;font-size:12px;color:#bbbbbb;letter-spacing:0.314px;">temp.iml</span>
<span style="left:40.9px;top:383.84px;font-size:12px;color:#bbbbbb;letter-spacing:-0.259px;">External Libraries</span>
<span style="left:262.6px;top:82.84px;font-size:12px;color:#bbbbbb;letter-spacing:0.025px;">Main.java</span>
<span style="left:364.6px;top:82.84px;font-size:12px;color:#6394bb;letter-spacing:-0.356px;">Osoba.java</span>
<span style="left:471.9px;top:82.84px;font-size:12px;color:#bbbbbb;letter-spacing:-0.100px;">Miasto.java</span>
<span class="m" style="left:247.9px;top:104.57px;font-size:11px;color:#585b5e;">1</span>
<span class="m" style="left:297px;top:104.19px;font-size:11.5px;color:#a9b7c6;letter-spacing:0.1px;"><span style="color:#cc7832;">package</span><span style="color:#a9b7c6;"> com.company.modele</span><span style="color:#cc7832;">;</span></span>
<span class="m" style="left:247.9px;top:121.57px;font-size:11px;color:#585b5e;">2</span>
<span class="m" style="left:247.9px;top:138.57px;font-size:11px;color:#585b5e;">3</span>
<span class="m" style="left:297px;top:138.19px;font-size:11.5px;color:#a9b7c6;letter-spacing:0.1px;"><span style="color:#cc7832;">public class </span><span style="color:#a9b7c6;">Osoba</span><span style="color:#a9b7c6;"> {</span></span>
<span class="m" style="left:247.9px;top:155.57px;font-size:11px;color:#585b5e;">4</span>
<span class="m" style="left:297px;top:155.19px;font-size:11.5px;color:#a9b7c6;letter-spacing:0.1px;"><span style="color:#a9b7c6;">    Float </span><span style="color:#747678;">wzrostWcm</span><span style="color:#cc7832;">;</span></span>
<span class="m" style="left:247.9px;top:172.57px;font-size:11px;color:#585b5e;">5</span>
<span class="m" style="left:297px;top:172.19px;font-size:11.5px;color:#a9b7c6;letter-spacing:0.1px;"><span style="color:#a9b7c6;">    Integer </span><span style="color:#747678;">wiek</span><span style="color:#cc7832;">;</span></span>
<span class="m" style="left:247.9px;top:189.57px;font-size:11px;color:#585b5e;">6</span>
<span class="m" style="left:247.9px;top:206.57px;font-size:11px;color:#585b5e;">7</span>
<span class="m" style="left:297px;top:206.19px;font-size:11.5px;color:#a9b7c6;letter-spacing:0.1px;"><span style="color:#a9b7c6;">    String </span><span style="color:#747678;">imie</span><span style="color:#cc7832;">;</span></span>
<span class="m" style="left:247.9px;top:223.57px;font-size:11px;color:#585b5e;">8</span>
<span class="m" style="left:297px;top:223.19px;font-size:11.5px;color:#a9b7c6;letter-spacing:0.1px;"><span style="color:#a9b7c6;">    String </span><span style="color:#747678;">nazwisko</span><span style="color:#cc7832;">;</span></span>
<span class="m" style="left:247.9px;top:240.57px;font-size:11px;color:#585b5e;">9</span>
<span class="m" style="left:241.3px;top:257.57px;font-size:11px;color:#585b5e;">10</span>
<span class="m" style="left:297px;top:257.19px;font-size:11.5px;color:#a9b7c6;letter-spacing:0.1px;"><span style="color:#a9b7c6;">    </span><span style="color:#a9b7c6;">KolorWłosów</span><span style="color:#a9b7c6;"> </span><span style="color:#747678;">kolorWłosów</span><span style="color:#cc7832;">;</span></span>
<span class="m" style="left:241.3px;top:274.57px;font-size:11px;color:#585b5e;">11</span>
<span class="m" style="left:297px;top:274.19px;font-size:11.5px;color:#a9b7c6;letter-spacing:0.1px;"><span style="color:#a9b7c6;">    </span><span style="color:#a9b7c6;">Płeć</span><span style="color:#a9b7c6;"> </span><span style="color:#747678;">płeć</span><span style="color:#cc7832;">;</span></span>
<span class="m" style="left:241.3px;top:291.57px;font-size:11px;color:#585b5e;">12</span>
<span class="m" style="left:241.3px;top:308.57px;font-size:11px;color:#585b5e;">13</span>
<span class="m" style="left:297px;top:308.19px;font-size:11.5px;color:#a9b7c6;letter-spacing:0.1px;"><span style="color:#a9b7c6;">    Boolean </span><span style="color:#747678;">czyPrzyjaciel</span><span style="color:#cc7832;">;</span></span>
<span class="m" style="left:241.3px;top:325.57px;font-size:11px;color:#585b5e;">14</span>
<span class="m" style="left:297px;top:325.19px;font-size:11.5px;color:#a9b7c6;letter-spacing:0.1px;"><span style="color:#a9b7c6;">    </span><span style="color:#a9b7c6;">Miasto</span><span style="color:#a9b7c6;"> </span><span style="color:#747678;">miastoZamieszkania</span><span style="color:#cc7832;">;</span></span>
<span class="m" style="left:241.3px;top:342.57px;font-size:11px;color:#585b5e;">15</span>
<span class="m" style="left:297px;top:342.19px;font-size:11.5px;color:#a9b7c6;letter-spacing:0.1px;"><span style="color:#a9b7c6;">}</span></span>
<span class="m" style="left:241.3px;top:359.57px;font-size:11px;color:#585b5e;">16</span>
<span class="m" style="left:297px;top:359.19px;font-size:11.5px;color:#a9b7c6;letter-spacing:0.1px;"><span style="color:#cc7832;">enum </span><span style="color:#a9b7c6;">Płeć</span><span style="color:#a9b7c6;">{</span></span>
<span class="m" style="left:241.3px;top:376.57px;font-size:11px;color:#585b5e;">17</span>
<span class="m" style="left:297px;top:376.19px;font-size:11.5px;color:#a9b7c6;letter-spacing:0.1px;"><span style="color:#a9b7c6;">    </span><span style="color:#747678;font-style:italic;">kobieta</span><span style="color:#cc7832;">,</span></span>
<span class="m" style="left:241.3px;top:393.57px;font-size:11px;color:#585b5e;">18</span>
<span class="m" style="left:297px;top:393.19px;font-size:11.5px;color:#a9b7c6;letter-spacing:0.1px;"><span style="color:#a9b7c6;">    </span><span style="color:#747678;font-style:italic;">mężczyzna</span></span>
<span class="m" style="left:241.3px;top:410.57px;font-size:11px;color:#585b5e;">19</span>
<span class="m" style="left:297px;top:410.19px;font-size:11.5px;color:#a9b7c6;letter-spacing:0.1px;"><span style="color:#a9b7c6;">}</span></span>
<span class="m" style="left:241.3px;top:427.57px;font-size:11px;color:#585b5e;">20</span>
<span class="m" style="left:297px;top:427.19px;font-size:11.5px;color:#a9b7c6;letter-spacing:0.1px;"><span style="color:#cc7832;">enum </span><span style="color:#a9b7c6;">KolorWłosów</span><span style="color:#a9b7c6;">{</span></span>
<span class="m" style="left:241.3px;top:444.57px;font-size:11px;color:#585b5e;">21</span>
<span class="m" style="left:297px;top:444.19px;font-size:11.5px;color:#a9b7c6;letter-spacing:0.1px;"><span style="color:#a9b7c6;">    </span><span style="color:#747678;font-style:italic;">szatyn</span><span style="color:#cc7832;">,</span></span>
<span class="m" style="left:241.3px;top:461.57px;font-size:11px;color:#585b5e;">22</span>
<span class="m" style="left:297px;top:461.19px;font-size:11.5px;color:#a9b7c6;letter-spacing:0.1px;"><span style="color:#a9b7c6;">    </span><span style="color:#747678;font-style:italic;">brunet</span><span style="color:#cc7832;">,</span></span>
<span class="m" style="left:241.3px;top:478.57px;font-size:11px;color:#585b5e;">23</span>
<span class="m" style="left:297px;top:478.19px;font-size:11.5px;color:#a9b7c6;letter-spacing:0.1px;"><span style="color:#a9b7c6;">    </span><span style="color:#747678;font-style:italic;">blondyn</span><span style="color:#cc7832;">,</span></span>
<span class="m" style="left:241.3px;top:495.57px;font-size:11px;color:#585b5e;">24</span>
<span class="m" style="left:297px;top:495.19px;font-size:11.5px;color:#a9b7c6;letter-spacing:0.1px;"><span style="color:#a9b7c6;">    </span><span style="color:#747678;font-style:italic;">rudy</span></span>
<span class="m" style="left:241.3px;top:512.57px;font-size:11px;color:#585b5e;">25</span>
<span class="m" style="left:297px;top:512.19px;font-size:11.5px;color:#a9b7c6;letter-spacing:0.1px;"><span style="color:#a9b7c6;">}</span></span>
<span style="left:1603.0px;top:54.84px;font-size:12px;color:#bbbbbb;letter-spacing:0.467px;">Main</span>
<span style="left:301.7px;top:1001.84px;font-size:12px;color:#a9acae;letter-spacing:-0.500px;">Osoba</span>
<span style="left:358.7px;top:1001.84px;font-size:12px;color:#bbbbbb;letter-spacing:-0.118px;">miastoZamieszkania</span>
<span style="left:30.7px;top:1023.84px;font-size:12px;color:#bbbbbb;letter-spacing:-0.133px;">Field 'miastoZamieszkania' is never used</span>
<span style="left:1642.9px;top:1023.84px;font-size:12px;color:#bbbbbb;transform:scaleX(0.9385);transform-origin:0 0;">14:18</span>
<span style="left:1682.1px;top:1023.84px;font-size:12px;color:#bbbbbb;transform:scaleX(0.8132);transform-origin:0 0;">CRLF</span>
<span style="left:1724.9px;top:1023.84px;font-size:12px;color:#bbbbbb;letter-spacing:-0.500px;">UTF-8</span>
<span style="left:1773.9px;top:1023.84px;font-size:12px;color:#bbbbbb;letter-spacing:-0.200px;">Git: master</span>
<svg style="left:411px;top:145px" width="7" height="16" viewBox="0 0 7 16"><path d="M0 0.5H3M4 0.5H7M0 15.5H3M4 15.5H7M3.5 1V15" stroke="#000" stroke-width="1" fill="none"/></svg>
</div></body></html>
